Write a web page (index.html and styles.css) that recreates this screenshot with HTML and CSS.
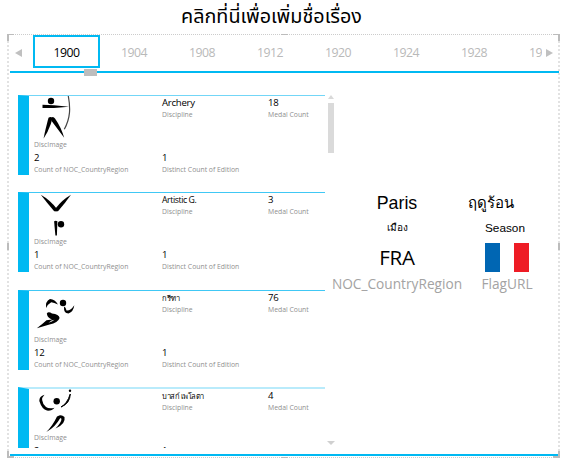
FILE: index.html
```html
<!DOCTYPE html>
<html lang="th">
<head>
    <meta charset="UTF-8">
    <meta name="viewport" content="width=device-width, initial-scale=1.0">
    <title>Olympics Report</title>
    <link rel="stylesheet" href="styles.css">
</head>
<body>
    <h1 class="title">คลิกที่นี่เพื่อเพิ่มชื่อเรื่อง</h1>

    <section class="frame">
        <!-- Year tabs -->
        <nav class="tabs">
            <span class="arrow arrow-left"></span>
            <div class="tab-list">
                <span class="tab active">1900</span>
                <span class="tab">1904</span>
                <span class="tab">1908</span>
                <span class="tab">1912</span>
                <span class="tab">1920</span>
                <span class="tab">1924</span>
                <span class="tab">1928</span>
                <span class="tab tab-cut">19</span>
            </div>
            <span class="arrow arrow-right"></span>
            <span class="tab-scroll"></span>
        </nav>

        <div class="content">
            <!-- Discipline cards -->
            <div class="card-list">
                <article class="card card-first">
                    <div class="picture">
                        <svg class="icon" viewBox="0 0 50 44">
                            <circle cx="17" cy="5" r="3.2"/>
                            <path d="M8.5 8.8L20 9.2L35 10.8L20 12L8.5 12Z"/>
                            <path d="M34.3 0C36.5 12 36.5 22 30.3 33.3" class="thin"/>
                            <path d="M14.5 21.8Q16.8 20 18.4 22.2L16.8 28Q14 36 9.6 42.5Q11.2 34 14.5 21.8Z"/>
                            <path d="M17.4 21.5Q19.4 20 21 22.5Q27 31 30.2 41.8Q24 33.5 17.6 25Z"/>
                        </svg>
                        <span class="label">DiscImage</span>
                    </div>
                    <div class="field"><b class="value">Archery</b><span class="label">Discipline</span></div>
                    <div class="field"><b class="value">18</b><span class="label">Medal Count</span></div>
                    <div class="field"><b class="value">2</b><span class="label">Count of NOC_CountryRegion</span></div>
                    <div class="field"><b class="value">1</b><span class="label">Distinct Count of Edition</span></div>
                </article>

                <article class="card">
                    <div class="picture">
                        <svg class="icon" viewBox="0 0 50 44">
                            <path d="M6.8 1.8Q16 7 23 16L22.5 18.3H20.2Q13.5 10.5 6.8 1.8Z"/>
                            <path d="M37 1.8Q28 7 21.5 15.5V18.3H24Q30.5 11 37 1.8Z"/>
                            <circle cx="27" cy="31.3" r="3.2"/>
                            <path d="M20.1 28.3Q21.8 27 23.4 28.3L22.9 42.5H21.4Z"/>
                        </svg>
                        <span class="label">DiscImage</span>
                    </div>
                    <div class="field"><b class="value narrow">Artistic G.</b><span class="label">Discipline</span></div>
                    <div class="field"><b class="value">3</b><span class="label">Medal Count</span></div>
                    <div class="field"><b class="value">1</b><span class="label">Count of NOC_CountryRegion</span></div>
                    <div class="field"><b class="value">1</b><span class="label">Distinct Count of Edition</span></div>
                </article>

                <article class="card">
                    <div class="picture">
                        <svg class="icon" viewBox="0 0 50 44">
                            <circle cx="29" cy="12" r="3.2"/>
                            <path d="M12.2 17Q11 10.5 16 8Q21 8.2 24 13.5Q20 11.5 17.2 11.3Q14 13 12.2 17Z"/>
                            <path d="M30 15.5Q31.8 16 32.5 19.5Q36.5 20 40.3 14.2Q39.5 20.5 34.5 22.6Q29.5 22.5 30 15.5Z"/>
                            <path d="M12.8 22.5Q14.5 20.2 18 22.6Q25 23.5 25.6 27Q24 31.8 15.5 33.5L2.8 37.3Q8 33.5 12.5 29.3L18 28.5Q13.5 27 12.8 22.5Z"/>
                            <path d="M14.5 31.8Q18 31 20.5 28.8L17.5 29.4Z" class="gap"/>
                        </svg>
                        <span class="label">DiscImage</span>
                    </div>
                    <div class="field"><b class="value thai">กรีฑา</b><span class="label">Discipline</span></div>
                    <div class="field"><b class="value">76</b><span class="label">Medal Count</span></div>
                    <div class="field"><b class="value">12</b><span class="label">Count of NOC_CountryRegion</span></div>
                    <div class="field"><b class="value">1</b><span class="label">Distinct Count of Edition</span></div>
                </article>

                <article class="card card-last">
                    <div class="picture">
                        <svg class="icon" viewBox="0 0 50 44">
                            <circle cx="22.7" cy="12.3" r="3.2"/>
                            <circle cx="36" cy="1.7" r="1.2"/>
                            <path d="M10.5 5.7Q5.2 7 5.3 12Q8 20.5 13 21.6Q18 22 20.5 18.7Q15 20 12 18Q5 11 10.5 5.7Z"/>
                            <path d="M27 18Q33 15 36.3 5Q36 14.5 27 18Z" class="outlined"/>
                            <path d="M23.5 27.5Q27 25 30.5 28Q32 35 21.5 39.5Q27.5 33.5 27.5 29.8Z"/>
                            <path d="M23 27.5Q26 26 26.3 29Q21 38.5 12.3 43Q18.5 37 23 27.5Z"/>
                        </svg>
                        <span class="label">DiscImage</span>
                    </div>
                    <div class="field"><b class="value thai">บาสก์ เพโลตา</b><span class="label">Discipline</span></div>
                    <div class="field"><b class="value">4</b><span class="label">Medal Count</span></div>
                    <div class="field"><b class="value">2</b></div>
                    <div class="field"><b class="value">1</b></div>
                </article>
            </div>

            <div class="scrollbar">
                <span class="scroll-up"></span>
                <span class="scroll-thumb"></span>
                <span class="scroll-down"></span>
            </div>

            <!-- Host city details -->
            <aside class="details">
                <div class="city">Paris</div>
                <div class="season">ฤดูร้อน</div>
                <div class="city-label">เมือง</div>
                <div class="season-label">Season</div>
                <div class="country">FRA</div>
                <div class="flag"><i class="blue"></i><i class="white"></i><i class="red"></i></div>
                <div class="caption">NOC_CountryRegion</div>
                <div class="caption">FlagURL</div>
            </aside>
        </div>

        <!-- Selection handles -->
        <i class="handle top-left"></i>
        <i class="handle top-right"></i>
        <i class="handle bottom-left"></i>
        <i class="handle bottom-right"></i>
        <i class="handle top-mid"></i>
        <i class="handle bottom-mid"></i>
        <i class="handle left-mid"></i>
        <i class="handle right-mid"></i>
    </section>
</body>
</html>
```
FILE: styles.css
```css
* {
    box-sizing: border-box;
}
body {
    margin: 0;
    background-color: #ffffff;
    color: #000000;
    font-family: "Open Sans", "Noto Sans", sans-serif;
    overflow: hidden;
}
.title {
    margin: 0;
    height: 34px;
    padding-right: 24px;
    text-align: center;
    font-family: "Liberation Sans", "Noto Sans Thai", sans-serif;
    font-size: 19.8px;
    font-weight: normal;
    line-height: 33px;
    white-space: nowrap;
}
.frame {
    position: relative;
    width: 553px;
    height: 424px;
    margin-left: 7px;
    border: 1px dotted #cccccc;
    border-left: 2px dotted #e2e2e2;
    border-right: 2px dotted #e2e2e2;
}
/* Year tabs */
.tabs {
    position: relative;
    display: flex;
    height: 38px;
    margin-left: 1px;
    width: 549px;
    border-bottom: 2px solid #00b9f2;
}
.tab-list {
    display: flex;
    width: 510px;
    margin-left: 15px;
    overflow: hidden;
}
.tab {
    flex: 0 0 68px;
    height: 33px;
    text-align: center;
    font-size: 12.3px;
    letter-spacing: -0.5px;
    line-height: 35px;
    color: #b9b9b9;
}
.tab.active {
    flex-basis: 67px;
    margin-left: 1px;
    color: #000000;
    box-shadow: inset 0 0 0 2px #00b9f2;
}
.tab-cut {
    flex-basis: 34px;
    padding-left: 21px;
    text-align: left;
}
.arrow {
    height: 0;
    margin-top: 14px;
    border: 4px solid transparent;
}
.arrow-left {
    border-left: 0;
    border-right: 7px solid #c0c0c0;
    margin-left: 5px;
    margin-right: -5px;
}
.arrow-right {
    border-right: 0;
    border-left: 7px solid #c0c0c0;
    margin-left: 4px;
}
.tab-scroll {
    position: absolute;
    left: 74px;
    top: 34px;
    width: 13px;
    height: 7px;
    background-color: #bdbdbd;
}
.content {
    display: flex;
    height: 383px;
    width: 549px;
    margin-left: 1px;
    padding-top: 22px;
    padding-left: 8px;
    border-bottom: 2px solid #00b9f2;
}
/* Cards */
.card-list {
    width: 307px;
    height: 353px;
    overflow: hidden;
}
.card {
    display: grid;
    grid-template-columns: 128px 106px 57px;
    grid-template-rows: 55px 24px;
    height: 80px;
    margin-bottom: 17.3px;
    padding-left: 5px;
    border-left: 11px solid #00b9f2;
    border-top: 1px solid #40c8f5;
}
.card-first {
    border-top-color: #73d6f7;
}
.card-last {
    border-top: 2px solid #b9ebfb;
}
.picture {
    display: flex;
    flex-direction: column;
}
.icon {
    width: 50px;
    height: 44px;
}
.icon .thin {
    fill: none;
    stroke: #444444;
    stroke-width: 1.2;
}
.icon .outlined {
    stroke: #000000;
    stroke-width: 1;
}
.icon .gap {
    fill: #ffffff;
}
.value {
    display: block;
    height: 14px;
    font-size: 9.6px;
    font-weight: normal;
    letter-spacing: -0.25px;
    line-height: 14px;
    white-space: nowrap;
}
.value.narrow {
    font-size: 8.7px;
    letter-spacing: -0.4px;
}
.value.thai {
    font-size: 7.5px;
    letter-spacing: -0.5px;
    word-spacing: 0.5px;
}
.label {
    display: block;
    height: 10px;
    font-size: 6.85px;
    line-height: 10px;
    color: #8f8f8f;
    white-space: nowrap;
}
/* Scrollbar */
.scrollbar {
    display: flex;
    flex-direction: column;
    align-items: center;
    width: 7px;
    height: 350px;
    margin-left: 2px;
}
.scroll-up {
    border: 3px solid transparent;
    border-top: 0;
    border-bottom: 4px solid #d9d9d9;
}
.scroll-thumb {
    width: 6px;
    height: 50px;
    margin-top: 4px;
    background-color: #dadada;
}
.scroll-down {
    margin-top: auto;
    border: 4px solid transparent;
    border-bottom: 0;
    border-top: 4px solid #d0d0d0;
}
/* City details */
.details {
    display: grid;
    grid-template-columns: 130px 90px;
    grid-template-rows: 24px 24px 36px 18px;
    align-content: start;
    align-items: center;
    justify-items: center;
    margin-left: -2px;
    padding-top: 96px;
    white-space: nowrap;
}
.city,
.season-label {
    font-family: "Liberation Sans", sans-serif;
}
.city {
    font-size: 17.8px;
}
.season {
    padding-right: 32px;
    font-size: 15px;
}
.city-label {
    font-size: 10px;
}
.season-label {
    padding-top: 2px;
    padding-right: 4px;
    font-size: 11.8px;
}
.country {
    font-size: 20.5px;
    letter-spacing: -0.2px;
    line-height: 24px;
}
.flag {
    display: flex;
    width: 44px;
    height: 29px;
}
.flag i {
    flex: 1;
}
.flag .blue {
    background-color: #0066b3;
}
.flag .red {
    background-color: #ee1c25;
}
.caption {
    font-size: 13.7px;
    line-height: 18px;
    color: #a3a3a3;
}
/* Selection handles */
.handle {
    position: absolute;
    width: 7px;
    height: 7px;
    border: 0 solid #bcbcbc;
}
.top-left {
    left: -2px;
    top: -1px;
    border-width: 1px 0 0 2px;
}
.top-right {
    right: -2px;
    top: -1px;
    border-width: 1px 2px 0 0;
}
.bottom-left {
    left: -2px;
    bottom: -1px;
    border-width: 0 0 2px 2px;
}
.bottom-right {
    right: -2px;
    bottom: -1px;
    border-width: 0 2px 2px 0;
}
.top-mid {
    left: 272px;
    top: -1px;
    border-top-width: 1px;
}
.bottom-mid {
    left: 272px;
    bottom: -1px;
    border-bottom-width: 1px;
}
.left-mid {
    left: -2px;
    top: 208px;
    border-left-width: 2px;
}
.right-mid {
    right: -2px;
    top: 208px;
    border-right-width: 2px;
}
```
